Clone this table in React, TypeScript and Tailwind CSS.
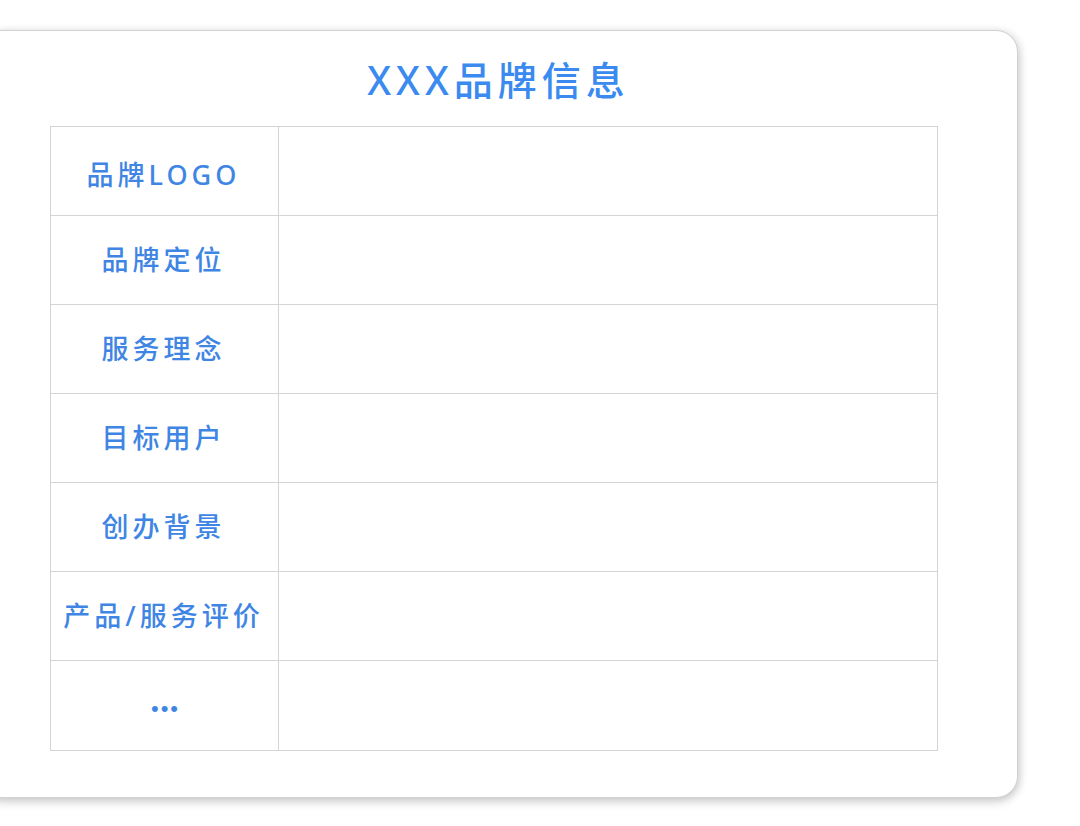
export default function App() {
  const rows = ["品牌LOGO", "品牌定位", "服务理念", "目标用户", "创办背景", "产品/服务评价", "•••"];

  return (
    <div
      className="w-[1080px] h-[826px] bg-white overflow-hidden pt-[30px]"
      style={{ fontFamily: '"Noto Sans", "Noto Sans CJK SC", sans-serif' }}
    >
      <div className="ml-[-20px] w-[1038px] h-[768px] bg-white rounded-[22px] border border-[#cfd2d5] shadow-[0_4px_10px_rgba(0,0,0,0.18),3px_0_8px_rgba(0,0,0,0.08)] pl-[69px]">
        <h1 className="h-[95px] w-[887px] flex items-center justify-center pt-[4px] pl-[10px] text-[39px] font-medium tracking-[5px] text-[#3a8aef]">
          XXX品牌信息
        </h1>
        <div className="w-[888px] border border-[#d4d4d4]">
          {rows.map((label, i) => (
            <div
              key={i}
              className={`flex h-[89px] ${i < rows.length - 1 ? "border-b border-[#d4d4d4]" : ""}`}
            >
              <div
                className={`w-[228px] shrink-0 border-r border-[#d4d4d4] flex items-center justify-center text-[#3f86e4] ${
                  i === 6
                    ? "text-[22px] tracking-[2px] pl-[2px] pt-[6px] font-['Liberation_Sans',sans-serif]"
                    : "text-[27px] font-medium tracking-[4px] pr-[2px]"
                } ${i === 0 ? "pt-[8px]" : ""}`}
              >
                {label}
              </div>
              <div className="flex-1" />
            </div>
          ))}
        </div>
      </div>
    </div>
  );
}
